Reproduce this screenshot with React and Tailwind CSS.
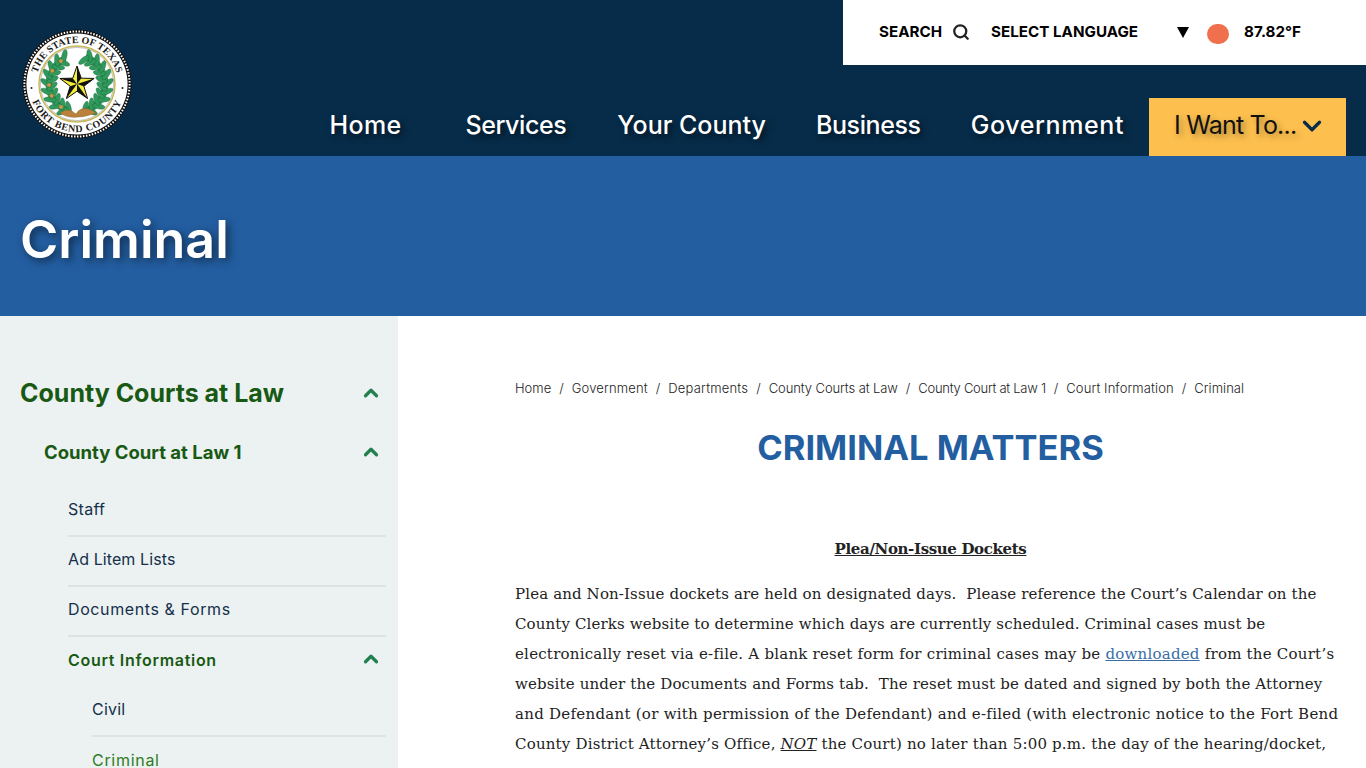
import { ChevronUp, ChevronDown, Search } from "lucide-react";

const poppins = "font-['Inter','Liberation_Sans',sans-serif]";

// point on a circle round the seal centre, degrees clockwise from the top
function pt(r, deg) {
  const a = (deg * Math.PI) / 180;
  return [55 + r * Math.sin(a), 55 - r * Math.cos(a)];
}

const starTips = [0, 72, 144, 216, 288].map((d) => pt(18, d));
const starInner = [36, 108, 180, 252, 324].map((d) => pt(7.2, d));

const leftLeaves = [200, 208, 216, 224, 232, 240, 248, 256, 264, 272, 280, 288, 296, 304, 312, 320, 328, 336];
const rightLeaves = [160, 152, 144, 136, 128, 120, 112, 104, 96, 88, 80, 72, 64, 56, 48, 40, 32, 24, 16];
const berries = [215, 245, 268, 298, 325];

function Leaf({ deg, r, tilt }) {
  const [x, y] = pt(r, deg);
  return <ellipse cx={x} cy={y} rx="6.4" ry="2.6" fill="#2f9a5b" stroke="#14532d" strokeWidth="0.3" transform={`rotate(${deg + tilt} ${x} ${y})`} />;
}

function Seal() {
  const [lx1, ly1] = pt(28, 195);
  const [lx2, ly2] = pt(28, 335);
  const [rx1, ry1] = pt(28, 165);
  const [rx2, ry2] = pt(28, 18);
  return (
    <svg viewBox="0 0 110 110" className="w-[110px] h-[110px]">
      <circle cx="55" cy="55" r="54.5" fill="#111" />
      <circle cx="55" cy="55" r="52.6" fill="none" stroke="#fff" strokeWidth="2" strokeDasharray="1.5 1.5" />
      <circle cx="55" cy="55" r="50.6" fill="#fff" />
      <circle cx="55" cy="55" r="38" fill="none" stroke="#c9b95a" strokeWidth="1.5" />
      <circle cx="55" cy="55" r="36.6" fill="none" stroke="#666" strokeWidth="0.4" />
      <defs>
        <path id="sealTop" d="M 55 96 A 41 41 0 1 1 55 14 A 41 41 0 1 1 55 96" />
        <path id="sealBottom" d="M 55 7 A 48 48 0 1 0 55 103 A 48 48 0 1 0 55 7" />
      </defs>
      <text fontFamily="Liberation Serif" fontSize="10" fontWeight="700" fill="#1b1b1b">
        <textPath href="#sealTop" startOffset="50%" textAnchor="middle">THE STATE OF TEXAS</textPath>
      </text>
      <text fontFamily="Liberation Serif" fontSize="10" fontWeight="700" fill="#1b1b1b" letterSpacing="0.7">
        <textPath href="#sealBottom" startOffset="50%" textAnchor="middle">FORT BEND COUNTY</textPath>
      </text>
      <circle cx="9.5" cy="59" r="1" fill="#222" />
      <circle cx="100.5" cy="59" r="1" fill="#222" />
      <path d={`M${lx1} ${ly1} A28 28 0 0 1 ${lx2} ${ly2}`} fill="none" stroke="#2f9a5b" strokeWidth="7" />
      <path d={`M${rx1} ${ry1} A28 28 0 0 0 ${rx2} ${ry2}`} fill="none" stroke="#2f9a5b" strokeWidth="7" />
      {leftLeaves.map((d, i) => (
        <Leaf key={d} deg={d} r={i % 2 ? 31 : 25} tilt={i % 2 ? -55 : 55} />
      ))}
      {rightLeaves.map((d, i) => (
        <Leaf key={d} deg={d} r={i % 2 ? 31 : 25} tilt={i % 2 ? 55 : -55} />
      ))}
      {berries.map((d) => {
        const [x, y] = pt(28, d);
        return <circle key={d} cx={x} cy={y} r="2.1" fill="#c99a4a" stroke="#7a5a22" strokeWidth="0.3" />;
      })}
      <path d="M38 84 C46 78 50 82 54 85 C58 78 66 78 74 84 C68 86 62 88 56 88 C50 89 44 88 38 84 Z" fill="#b9813c" stroke="#7a5a22" strokeWidth="0.4" />
      <polygon points={starTips.flatMap((p, i) => [p, starInner[i]]).map((p) => p.join(",")).join(" ")} fill="#f2ee3a" stroke="#111" strokeWidth="1" />
      {starTips.map((p, i) => (
        <polygon key={i} points={`55,55 ${p.join(",")} ${starInner[i].join(",")}`} fill="#111" />
      ))}
    </svg>
  );
}

function SideRow({ label, className, chevron, border }) {
  return (
    <div className={`flex items-center justify-between h-[50px] pb-[4px] text-[16px] ${border ? "border-b-2 border-[#dde3e5]" : ""} ${className}`}>
      <span>{label}</span>
      {chevron && <ChevronUp size={22} strokeWidth={3.5} className="text-[#22804f] mr-[4px] mb-[2px]" />}
    </div>
  );
}

export default function App() {
  const navShadow = "[text-shadow:3px_3px_6px_rgba(0,0,0,0.6)]";
  return (
    <div className={`h-[768px] overflow-hidden bg-white ${poppins}`}>
      <header className="h-[156px] bg-[#072c49] flex justify-between">
        <div className="pl-[22px] pt-[29px]">
          <Seal />
        </div>
        <div className="flex flex-col items-end justify-between">
          <div className="w-[523px] h-[65px] bg-white flex items-center pl-[36px] text-[15.2px] font-bold text-black">
            <span>SEARCH</span>
            <Search size={18} strokeWidth={3} className="ml-[10px] mb-[1px] text-[#222]" />
            <span className="ml-[21px]">SELECT LANGUAGE</span>
            <span className="ml-[39px] w-0 h-0 border-x-[6.5px] border-x-transparent border-t-[11px] border-t-black" />
            <span className="ml-[18px] w-[22px] h-[20px] mt-[2px] rounded-full bg-[#f0704e]" />
            <span className="ml-[15px]">87.82°F</span>
          </div>
          <nav className="flex items-center h-[58px] pr-[20px] text-[25px] font-medium text-white">
            <a className={`mr-[64px] pb-[2px] tracking-[0.3px] ${navShadow}`}>Home</a>
            <a className={`mr-[51px] pb-[2px] tracking-[-0.4px] ${navShadow}`}>Services</a>
            <a className={`mr-[50px] pb-[2px] ${navShadow}`}>Your County</a>
            <a className={`mr-[50px] pb-[2px] tracking-[-0.4px] ${navShadow}`}>Business</a>
            <a className={`mr-[25px] pb-[2px] tracking-[0.6px] ${navShadow}`}>Government</a>
            <a className="w-[197px] h-[58px] bg-[#fdc04e] text-[#111] font-normal tracking-[-0.8px] flex items-center pl-[25px] pb-[2px] [text-shadow:3px_3px_6px_rgba(0,0,0,0.35)]">
              I Want To...
              <ChevronDown size={30} strokeWidth={2.6} className="ml-[1px] text-[#072c49]" />
            </a>
          </nav>
        </div>
      </header>
      <div className="h-[160px] bg-[#235ea1] flex items-center pl-[20px] pt-[8px]">
        <h1 className="text-[52px] font-semibold text-white [text-shadow:3px_3px_8px_rgba(0,0,0,0.55)]">Criminal</h1>
      </div>
      <div className="flex">
        <aside className="w-[398px] h-[452px] bg-[#ecf1f2] pl-[20px] pr-[12px] pt-[54px]">
          <div className="flex items-center justify-between h-[48px] text-[25px] font-bold text-[#185a13]">
            <span>County Courts at Law</span>
            <ChevronUp size={22} strokeWidth={3.5} className="text-[#22804f] mr-[4px] mb-[2px]" />
          </div>
          <div className="mt-[12px] ml-[24px]">
            <SideRow label="County Court at Law 1" className="text-[18.5px] font-bold text-[#185a13]" chevron />
            <div className="ml-[24px] mt-[7px]">
              <SideRow label="Staff" className="tracking-[0.3px] text-[#14304a]" border />
              <SideRow label="Ad Litem Lists" className="tracking-[0.1px] text-[#14304a]" border />
              <SideRow label="Documents & Forms" className="tracking-[0.6px] text-[#14304a]" border />
              <SideRow label="Court Information" className="tracking-[0.7px] font-semibold text-[#185a13]" chevron />
              <div className="ml-[24px]">
                <SideRow label="Civil" className="tracking-[0.2px] text-[#14304a]" border />
                <SideRow label="Criminal" className="tracking-[0.7px] text-[#2e7d22]" />
              </div>
            </div>
          </div>
        </aside>
        <main className="flex-1 pl-[117px] pr-[20px]">
          <nav className="pt-[64px] flex items-center gap-[8px] text-[13px] font-light text-[#222] h-[82px]">
            <a>Home</a><span>/</span>
            <a className="tracking-[0.15px]">Government</a><span>/</span>
            <a className="tracking-[0.2px]">Departments</a><span>/</span>
            <a className="tracking-[-0.1px]">County Courts at Law</a><span>/</span>
            <a className="tracking-[-0.28px]">County Court at Law 1</a><span>/</span>
            <a className="tracking-[0.1px]">Court Information</a><span>/</span>
            <a className="tracking-[0.05px]">Criminal</a>
          </nav>
          <h2 className="mt-[28px] text-center text-[34.5px] leading-[44px] font-bold text-[#235ea1]">CRIMINAL MATTERS</h2>
          <div className="font-['DejaVu_Serif','Liberation_Serif',serif] text-[15px] leading-[30px] text-[#222]">
            <p className="mt-[64px] text-center font-bold underline tracking-[-0.35px]">Plea/Non-Issue Dockets</p>
            <p className="mt-[15px] whitespace-nowrap">
              <span className="block tracking-[0.13px]">Plea and Non-Issue dockets are held on designated days.&nbsp; Please reference the Court’s Calendar on the</span>
              <span className="block tracking-[0.13px]">County Clerks website to determine which days are currently scheduled. Criminal cases must be</span>
              <span className="block tracking-[0.23px]">electronically reset via e-file. A blank reset form for criminal cases may be <a className="underline text-[#3a6ea5]">downloaded</a> from the Court’s</span>
              <span className="block tracking-[0.15px]">website under the Documents and Forms tab.&nbsp; The reset must be dated and signed by both the Attorney</span>
              <span className="block tracking-[0.27px]">and Defendant (or with permission of the Defendant) and e-filed (with electronic notice to the Fort Bend</span>
              <span className="block tracking-[0.19px]">County District Attorney’s Office, <em className="underline">NOT</em> the Court) no later than 5:00 p.m. the day of the hearing/docket,</span>
              <span className="block tracking-[0.17px]">be accomplished on a Friday, the reset must be done prior to the setting in order to avoid a forfeiture.</span>
            </p>
          </div>
        </main>
      </div>
    </div>
  );
}
